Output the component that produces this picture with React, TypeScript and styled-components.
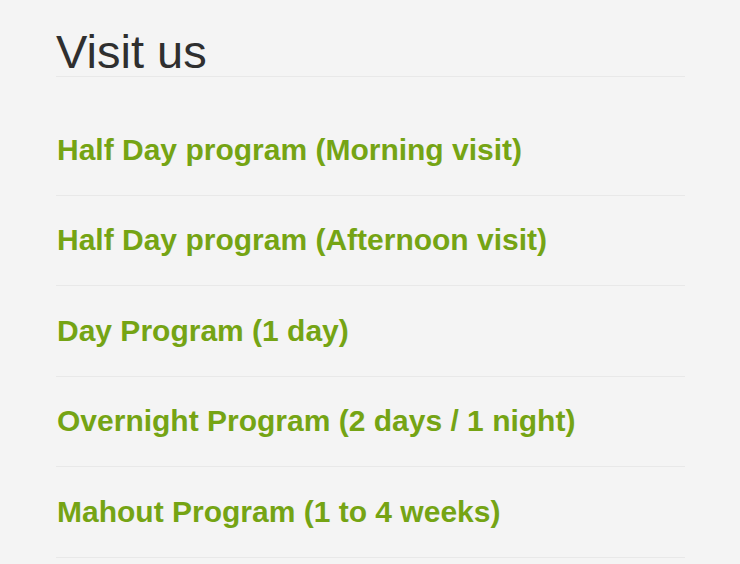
import styled, { createGlobalStyle } from 'styled-components';

const GlobalStyle = createGlobalStyle`
  html, body {
    margin: 0;
    padding: 0;
    background: #f4f4f4;
  }
  body {
    font-family: 'Liberation Sans', Arial, Helvetica, sans-serif;
  }
`;

const programs = [
  'Half Day program (Morning visit)',
  'Half Day program (Afternoon visit)',
  'Day Program (1 day)',
  'Overnight Program (2 days / 1 night)',
  'Mahout Program (1 to 4 weeks)',
];

const Page = styled.div`
  width: 629px;
  padding: 29px 0 0 56px;
`;

const Heading = styled.h1`
  margin: 0;
  padding-bottom: 1px;
  font-size: 47px;
  line-height: 46px;
  font-weight: normal;
  color: #2f2f2f;
  border-bottom: 1px solid #e8e8e8;
`;

const ProgramList = styled.ul`
  list-style: none;
  margin: 28px 0 0;
  padding: 0;
`;

const ProgramItem = styled.li`
  box-sizing: border-box;
  height: 90.5px;
  display: flex;
  align-items: center;
  border-bottom: 1px solid #e8e8e8;
`;

const ProgramLink = styled.a`
  font-size: 30px;
  line-height: 36px;
  font-weight: bold;
  color: #75a414;
  text-decoration: none;
  padding-left: 1px;
`;

const App = () => {
  return (
    <>
      <GlobalStyle />
      <Page>
        <Heading>Visit us</Heading>
        <ProgramList>
          {programs.map((name) => (
            <ProgramItem key={name}>
              <ProgramLink href="#">{name}</ProgramLink>
            </ProgramItem>
          ))}
        </ProgramList>
      </Page>
    </>
  );
};

export default App;
